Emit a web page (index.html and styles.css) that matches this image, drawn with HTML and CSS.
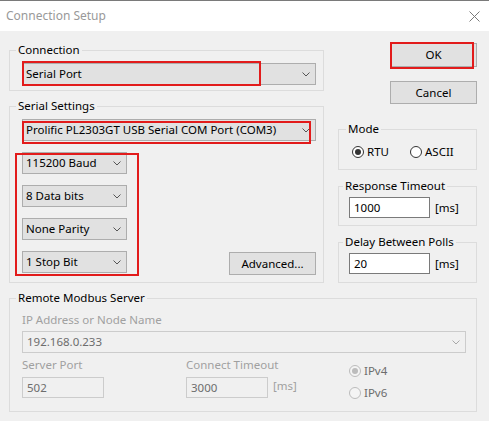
FILE: index.html
```html
<!DOCTYPE html>
<html>
<head>
<meta charset="utf-8">
<link rel="stylesheet" href="styles.css">
</head>
<body>
<div class="titlebar">
  <span class="title">Connection Setup</span>
  <svg class="close" width="11" height="11" viewBox="0 0 11 11"><path d="M0.5 0.5 L10.5 10.5 M10.5 0.5 L0.5 10.5" stroke="#7a7a7a" stroke-width="1" fill="none"/></svg>
</div>
<div class="content">
  <div class="top">
    <div class="leftcol">
      <fieldset class="group conn">
        <legend>Connection</legend>
        <div class="combo wide">
          <span>Serial Port</span>
          <svg class="chev" width="8" height="5" viewBox="0 0 8 5"><path d="M0.5 0.5 L4 4 L7.5 0.5" stroke="#555" fill="none"/></svg>
          <div class="anno anno-conn"></div>
        </div>
      </fieldset>
      <fieldset class="group serial">
        <legend>Serial Settings</legend>
        <div class="combo wide">
          <span>Prolific PL2303GT USB Serial COM Port (COM3)</span>
          <svg class="chev" width="8" height="5" viewBox="0 0 8 5"><path d="M0.5 0.5 L4 4 L7.5 0.5" stroke="#555" fill="none"/></svg>
          <div class="anno anno-com"></div>
        </div>
        <div class="serial-row">
          <div class="small-col">
            <div class="combo small"><span>115200 Baud</span><svg class="chev" width="8" height="5" viewBox="0 0 8 5"><path d="M0.5 0.5 L4 4 L7.5 0.5" stroke="#555" fill="none"/></svg></div>
            <div class="combo small"><span>8 Data bits</span><svg class="chev" width="8" height="5" viewBox="0 0 8 5"><path d="M0.5 0.5 L4 4 L7.5 0.5" stroke="#555" fill="none"/></svg></div>
            <div class="combo small"><span>None Parity</span><svg class="chev" width="8" height="5" viewBox="0 0 8 5"><path d="M0.5 0.5 L4 4 L7.5 0.5" stroke="#555" fill="none"/></svg></div>
            <div class="combo small"><span>1 Stop Bit</span><svg class="chev" width="8" height="5" viewBox="0 0 8 5"><path d="M0.5 0.5 L4 4 L7.5 0.5" stroke="#555" fill="none"/></svg></div>
            <div class="anno anno-group"></div>
          </div>
          <div class="btn advanced">Advanced...</div>
        </div>
      </fieldset>
    </div>
    <div class="rightcol">
      <div class="btn ok">OK<div class="anno anno-ok"></div></div>
      <div class="btn cancel">Cancel</div>
      <fieldset class="group mode">
        <legend>Mode</legend>
        <div class="radios">
          <span class="ritem"><span class="radio checked"></span>RTU</span>
          <span class="ritem ascii"><span class="radio"></span>ASCII</span>
        </div>
      </fieldset>
      <fieldset class="group resp">
        <legend>Response Timeout</legend>
        <div class="field"><div class="input">1000</div><span class="unit">[ms]</span></div>
      </fieldset>
      <fieldset class="group delay">
        <legend>Delay Between Polls</legend>
        <div class="field"><div class="input">20</div><span class="unit">[ms]</span></div>
      </fieldset>
    </div>
  </div>
  <fieldset class="group remote">
    <legend>Remote Modbus Server</legend>
    <div class="dlabel">IP Address or Node Name</div>
    <div class="combo ip"><span>192.168.0.233</span><svg class="chev" width="8" height="5" viewBox="0 0 8 5"><path d="M0.5 0.5 L4 4 L7.5 0.5" stroke="#a8a8a8" fill="none"/></svg></div>
    <div class="remote-row">
      <div class="rcol port">
        <div class="dlabel">Server Port</div>
        <div class="input disabled">502</div>
      </div>
      <div class="rcol timeout">
        <div class="dlabel">Connect Timeout</div>
        <div class="field"><div class="input disabled">3000</div><span class="unit dunit">[ms]</span></div>
      </div>
      <div class="rcol ipver">
        <span class="ritem dis"><span class="radio checked disabled"></span>IPv4</span>
        <span class="ritem dis"><span class="radio disabled"></span>IPv6</span>
      </div>
    </div>
  </fieldset>
</div>
</body>
</html>
```
FILE: styles.css
```css
* { box-sizing: border-box; }
html, body { margin: 0; padding: 0; }
body {
  width: 489px;
  height: 421px;
  background: #f0f0f0;
  font-family: "Noto Sans", "Open Sans", sans-serif;
  font-size: 11.5px;
  line-height: 16px;
  color: #000;
  overflow: hidden;
}
.titlebar {
  height: 31px;
  background: #fff;
  border-top: 1px solid #7a7a7a;
  display: flex;
  align-items: center;
  padding-left: 6px;
}
.title { color: #999; font-size: 12px; }
.close { margin-left: auto; margin-right: 9px; }
.content { padding: 11px 12px 0 9px; }
.top { display: flex; gap: 14px; }
.leftcol { width: 315px; display: flex; flex-direction: column; gap: 7px; }
.rightcol { width: 139px; display: flex; flex-direction: column; }

.group {
  margin: 0;
  border: 1px solid #dcdcdc;
  min-width: 0;
}
.group legend {
  padding: 0 2px;
  margin-left: -6px;
  line-height: 16px;
  height: 16px;
}
.conn { padding: 5px 7px 5px 12px; }
.serial { padding: 5px 7px 9px 12px; }

.combo {
  position: relative;
  height: 22px;
  border: 1px solid #adadad;
  background: #e1e1e1;
  display: flex;
  align-items: center;
  padding-left: 3px;
  white-space: nowrap;
}
.chev { margin-left: auto; margin-right: 5px; flex: none; }
.small { width: 105px; }

.anno {
  position: absolute;
  border: 2px solid #e21b1b;
  pointer-events: none;
}
.anno-conn { left: -1px; top: -3px; width: 239px; height: 25px; }
.anno-com { left: -1px; top: 1px; width: 289px; height: 23px; }
.anno-group { left: -7px; top: 1px; width: 124px; height: 123px; }
.anno-ok { left: -1px; top: -2px; width: 84px; height: 27px; }

.serial-row { display: flex; margin-top: 11px; }
.small-col { position: relative; display: flex; flex-direction: column; gap: 11px; }
.btn {
  position: relative;
  border: 1px solid #adadad;
  background: #e1e1e1;
  display: flex;
  align-items: center;
  justify-content: center;
}
.advanced { width: 87px; height: 23px; margin-left: auto; align-self: flex-end; margin-bottom: -2px; }
.ok { width: 87px; height: 24px; margin-left: auto; margin-top: 1px; }
.cancel { width: 87px; height: 23px; margin-left: auto; margin-top: 14px; }

.group.mode { margin-top: 17px; padding: 7px 8px 9px 13px; }
.radios { display: flex; height: 16px; align-items: center; }
.ritem { display: flex; align-items: center; gap: 3px; height: 16px; }
.ascii { margin-left: 21px; }
.radio {
  position: relative;
  width: 12px;
  height: 12px;
  border: 1px solid #333;
  border-radius: 50%;
  background: #fff;
  flex: none;
}
.radio.checked::after {
  content: "";
  position: absolute;
  left: 2px;
  top: 2px;
  width: 6px;
  height: 6px;
  border-radius: 50%;
  background: #333;
}
.radio.disabled { border-color: #bcbcbc; background: #f4f4f4; }
.radio.disabled.checked::after { background: #bcbcbc; }

.group.resp { margin-top: 8px; padding: 3px 8px 7px 10px; }
.group.delay { margin-top: 8px; padding: 3px 8px 8px 10px; }
.field { display: flex; align-items: center; gap: 5px; }
.input {
  width: 81px;
  height: 21px;
  border: 1px solid #7a7a7a;
  background: #fff;
  padding-left: 4px;
  display: flex;
  align-items: center;
}
.input.disabled { width: 82px; border-color: #cccccc; background: #f0f0f0; color: #6d6d6d; }
.unit { color: #000; }
.dunit { color: #a0a0a0; }

.group.remote { margin-top: 7px; padding: 6px 10px 10px 12px; }
.dlabel { color: #a0a0a0; height: 16px; }
.ip { margin-top: 3px; background: #f0f0f0; border-color: #cccccc; color: #6d6d6d; padding-left: 4px; }
.remote-row { display: flex; margin-top: 4px; }
.rcol .input { margin-top: 4px; }
.port { width: 164px; }
.timeout { width: 163px; }
.ipver { display: flex; flex-direction: column; gap: 6px; padding-top: 6px; }
.dis { color: #6d6d6d; }
```
